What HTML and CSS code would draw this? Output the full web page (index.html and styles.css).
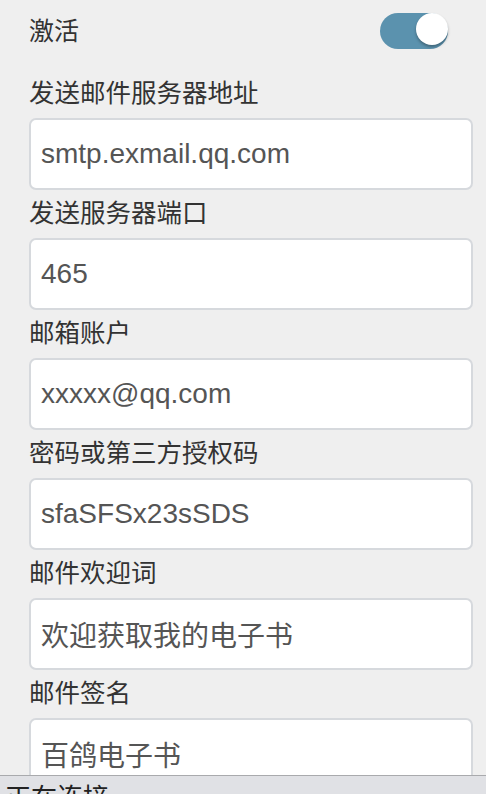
FILE: index.html
```html
<!DOCTYPE html>
<html lang="zh-CN">
<head>
<meta charset="utf-8">
<title>邮件设置</title>
<link rel="stylesheet" href="styles.css">
</head>
<body>
<main class="form">
  <div class="switch-row">
    <span class="switch-label">激活</span>
    <span class="switch on"><span class="knob"></span></span>
  </div>

  <div class="field">
    <label class="label">发送邮件服务器地址</label>
    <div class="input">smtp.exmail.qq.com</div>
  </div>
  <div class="field">
    <label class="label">发送服务器端口</label>
    <div class="input">465</div>
  </div>
  <div class="field">
    <label class="label">邮箱账户</label>
    <div class="input">xxxxx@qq.com</div>
  </div>
  <div class="field">
    <label class="label">密码或第三方授权码</label>
    <div class="input">sfaSFSx23sSDS</div>
  </div>
  <div class="field">
    <label class="label">邮件欢迎词</label>
    <div class="input">欢迎获取我的电子书</div>
  </div>
  <div class="field">
    <label class="label">邮件签名</label>
    <div class="input">百鸽电子书</div>
  </div>
</main>
<div class="status-bar">正在连接...</div>
</body>
</html>
```

FILE: styles.css
```css
html {
  overflow: hidden;
}
body {
  margin: 0;
  background: #efefef;
  font-family: "Noto Sans CJK SC", "Noto Sans", sans-serif;
  color: #333;
}
.form {
  padding: 0 13px 0 29px;
}
.switch-row {
  display: flex;
  align-items: center;
  justify-content: space-between;
  height: 36px;
  padding-top: 13px;
  margin-bottom: 21px;
  padding-right: 25px;
}
.switch-label {
  font-size: 25px;
  line-height: 32px;
  padding-bottom: 4px;
  color: #333;
}
.switch {
  position: relative;
  width: 68px;
  height: 36px;
  border-radius: 18px;
  background: #5b92ae;
}
.knob {
  position: absolute;
  right: 0;
  top: 0;
  width: 32px;
  height: 32px;
  border-radius: 50%;
  background: #fff;
  box-shadow: 0 2px 3px rgba(0, 0, 0, 0.3);
}
.field {
  display: flex;
  flex-direction: column;
}
.label {
  display: block;
  box-sizing: border-box;
  height: 48px;
  line-height: 42px;
  font-size: 25.5px;
  color: #333;
}
.input {
  box-sizing: border-box;
  height: 72px;
  display: flex;
  align-items: center;
  padding-left: 10px;
  background: #fff;
  border: 2px solid #d6d9dd;
  border-radius: 7px;
  font-family: "Liberation Sans", "Noto Sans CJK SC", sans-serif;
  font-size: 28px;
  color: #555;
}
.status-bar {
  position: fixed;
  left: 0;
  right: 0;
  bottom: 0;
  height: 18px;
  background: #e0e1e5;
  border-top: 1px solid #a9aaad;
  padding-left: 5px;
  font-size: 26px;
  line-height: 40px;
  color: #222;
  overflow: hidden;
}
```
